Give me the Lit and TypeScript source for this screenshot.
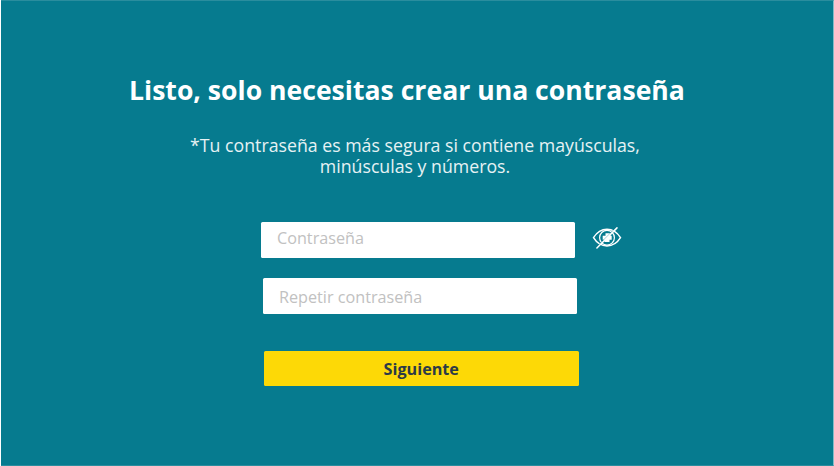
import { LitElement, html, css } from "lit";
import { customElement } from "lit/decorators.js";

@customElement("app-root")
export class AppRoot extends LitElement {
  static styles = css`
    :host {
      display: block;
      width: 834px;
      height: 466px;
      overflow: hidden;
      background: #fff;
      font-family: "Open Sans", sans-serif;
    }
    .panel {
      box-sizing: border-box;
      display: flex;
      flex-direction: column;
      align-items: flex-start;
      width: 833px;
      height: 466px;
      margin-left: 1px;
      padding-top: 70px;
      background: #067b8f;
      border: 1px solid #2a8d9e;
      border-left: 0;
      border-right-color: #83bcc7;
    }
    h1 {
      margin: 0 0 0 128px;
      font-size: 26.6px;
      line-height: 38px;
      font-weight: 700;
      color: #fff;
      white-space: nowrap;
    }
    p {
      width: 500px;
      margin: 26px 0 0 164px;
      font-size: 17.73px;
      line-height: 21px;
      font-weight: 400;
      text-align: center;
      color: #e6f2f4;
      white-space: nowrap;
    }
    form {
      display: flex;
      flex-direction: column;
      align-items: flex-start;
      margin: 45px 0 0 259.5px;
    }
    .row {
      display: flex;
      align-items: flex-start;
      gap: 17px;
    }
    input, button {
      box-sizing: border-box;
      width: 314.5px;
      height: 35.5px;
      border: 0;
      border-radius: 1.5px;
      outline: 0;
      font-family: inherit;
      font-size: 16.2px;
    }
    input {
      padding: 0 16.5px;
      background: #fff;
    }
    input::placeholder {
      color: #c1c1c1;
      opacity: 1;
    }
    .first { padding-bottom: 4px; }
    .repeat { margin: 20.5px 0 0 2px; padding-top: 2px; }
    button {
      margin: 37px 0 0 3.5px;
      padding: 2px 0 0;
      background: #fdd906;
      color: #2c3a47;
      font-weight: 700;
    }
    .eye {
      display: block;
      width: 30px;
      height: 24px;
      margin-top: 4px;
    }
  `;

  render() {
    return html`
      <div class="panel">
        <h1>Listo, solo necesitas crear una contraseña</h1>
        <p>*Tu contraseña es más segura si contiene mayúsculas,<br />minúsculas y números.</p>
        <form>
          <div class="row">
            <input class="first" placeholder="Contraseña" />
            <svg class="eye" viewBox="0 0 30 24" fill="none" stroke="#fff">
              <path stroke-width="1.5" d="M1.500 11.700C5 6.100 9.500 3.300 15 3.300S25 6.100 28.500 11.700C25 17.300 20.500 20 15 20S5 17.300 1.500 11.700Z" />
              <circle cx="15" cy="11.700" r="7.400" stroke-width="1.200" />
              <path fill="#fff" stroke="none" d="M13.500 7.300h5v2.500h1.200v4h-2.200v2.200h-5v-2.200h-1.800v-4h2.800z" />
              <path stroke="#067b8f" stroke-width="0.700" d="M5.500 20.200 24.600 1.100" />
              <path stroke-width="1.500" stroke-linecap="round" d="M4.900 22 25 1.900" />
            </svg>
          </div>
          <input class="repeat" placeholder="Repetir contraseña" />
          <button type="button">Siguiente</button>
        </form>
      </div>
    `;
  }
}
